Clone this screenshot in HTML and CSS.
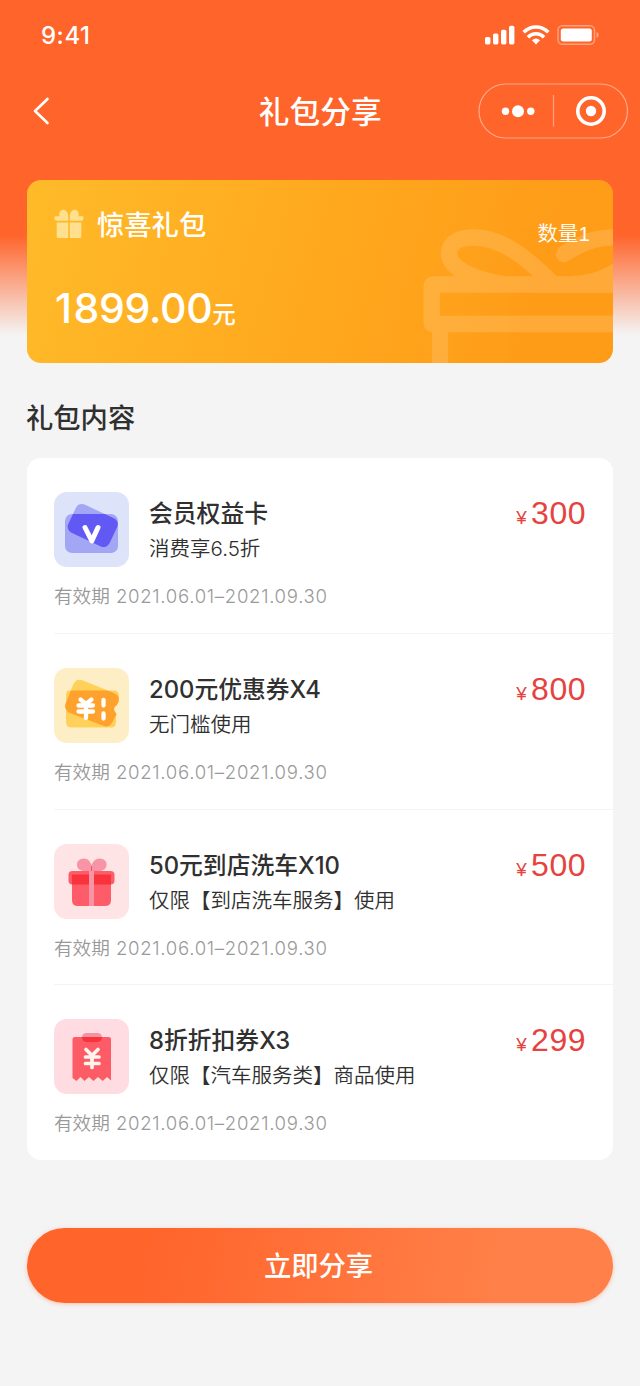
FILE: index.html
```html
<!DOCTYPE html>
<html lang="zh-CN">
<head>
<meta charset="utf-8">
<title>礼包分享</title>
<link rel="stylesheet" href="styles.css">
</head>
<body>
<div class="page">
  <header class="status">
    <span class="time">9:41</span>
    <svg class="signals" width="116" height="24" viewBox="0 0 116 24" fill="#fff">
      <rect x="1" y="13" width="5.400" height="7.400" rx="1.600"/>
      <rect x="9" y="9.500" width="5.400" height="10.900" rx="1.600"/>
      <rect x="17" y="5.800" width="5.400" height="14.600" rx="1.600"/>
      <rect x="25" y="1.800" width="5.400" height="18.600" rx="1.600"/>
      <g fill="none" stroke="#fff" stroke-width="3.500">
        <path d="M39.700 8.300C46.500 1.200 57.500 1.200 64.300 8.300"/>
        <path d="M43.900 13.200C48.500 8.500 55.500 8.500 60.100 13.200"/>
      </g>
      <path d="M47.900 16.300Q52 12.900 56.100 16.300L52 20.400Z"/>
      <rect x="74" y="1.800" width="36.500" height="18.400" rx="4.500" fill="none" stroke="#fff" stroke-opacity=".4" stroke-width="1.500"/>
      <rect x="76.800" y="4.600" width="31" height="12.800" rx="2.500"/>
      <path d="M112.600 7.800Q116.800 11 112.600 14.200Z" opacity=".45"/>
    </svg>
  </header>

  <nav class="nav">
    <svg class="back" width="20" height="30" viewBox="0 0 20 30" fill="none" stroke="#fff" stroke-width="2.600" stroke-linecap="round" stroke-linejoin="round"><path d="M15.500 3L3 15L15.500 27"/></svg>
    <h1 class="title">礼包分享</h1>
    <svg class="capsule" width="151" height="56" viewBox="0 0 151 56" fill="#fff">
      <rect x="1" y="1" width="148.500" height="54" rx="27" fill="none" stroke="#fff" stroke-opacity=".45" stroke-width="1.200"/>
      <path d="M75.500 12V43.500" stroke="#fff" stroke-opacity=".4" stroke-width="1.200"/>
      <circle cx="27.500" cy="28.300" r="3.700"/><circle cx="40" cy="28.300" r="6"/><circle cx="52.800" cy="28.300" r="3.700"/>
      <circle cx="113" cy="28" r="13.200" fill="none" stroke="#fff" stroke-width="3.600"/><circle cx="113" cy="28" r="5.200"/>
    </svg>
  </nav>

  <section class="bonus">
    <svg class="bonus-art" width="190" height="134" viewBox="423 229 190 134" fill="none" stroke="#fff" stroke-width="16.300">
      <g opacity=".14">
        <rect x="431.700" y="284.500" width="240" height="39.500" rx="1" stroke-linejoin="round"/>
        <path d="M440 332V370"/>
        <path d="M503 284C470 279 449 267 449 253C449 243 459 237.500 473 237.500C502 237.500 526 257 553 284"/>
        <path d="M564 254C581 243 596 236.500 620 237.500" stroke-linecap="round"/>
        <path d="M572 284C593 284 607 277 622 268"/>
      </g>
    </svg>
    <div class="bonus-head">
      <svg class="bonus-icon" width="30" height="30" viewBox="0 0 30 30" fill="#ffe08f">
        <path d="M2 7.200H5.700C4.200 3.300 7.200.2 10 .8C12.500 1.300 13.500 3.800 14.200 5.900V11.800H3Q.5 11.800.5 9.500V8.500Q.5 7.200 2 7.200Z"/>
        <path d="M28 7.200H24.300C25.800 3.300 22.800.2 20 .8C17.500 1.300 16.500 3.800 15.800 5.900V11.800H27Q29.500 11.800 29.500 9.500V8.500Q29.500 7.200 28 7.200Z"/>
        <path d="M2.700 13.400H14.200V29H4.200Q2.700 29 2.700 27.500ZM15.800 13.400H27.300V27.500Q27.300 29 25.800 29H15.800Z"/>
      </svg>
      <h2 class="bonus-name">惊喜礼包</h2>
      <span class="bonus-count">数量1</span>
    </div>
    <p class="bonus-sum"><span class="lead">1</span>899.00<small>元</small></p>
  </section>

  <h2 class="section-title">礼包内容</h2>

  <ul class="list">
    <li class="item">
      <div class="item-main">
        <svg class="icon" viewBox="0 0 75 75">
          <rect width="75" height="75" rx="13" fill="#dde4f9"/>
          <rect x="11" y="22" width="53" height="39" rx="7" fill="#a3a6f5"/>
          <rect x="16" y="18" width="45.500" height="31" rx="6.500" transform="rotate(25 38.750 33.500)" fill="#a3a6f5"/>
          <clipPath id="card"><rect x="11" y="22" width="53" height="39" rx="7"/></clipPath>
          <g clip-path="url(#card)"><rect x="16" y="18" width="45.500" height="31" rx="6.500" transform="rotate(25 38.750 33.500)" fill="#6259f5"/></g>
          <path d="M31 35.500L37.800 49L44 35.500" fill="none" stroke="#fff" stroke-width="5" stroke-linecap="round" stroke-linejoin="round"/>
        </svg>
        <div class="item-text"><h3>会员权益卡</h3><p>消费享6.5折</p></div>
        <div class="price"><i>¥</i>300</div>
      </div>
      <p class="valid">有效期 <span>2021.06.01–2021.09.30</span></p>
    </li>
    <li class="item">
      <div class="item-main">
        <svg class="icon" viewBox="0 0 75 75">
          <rect width="75" height="75" rx="13" fill="#feeec6"/>
          <path d="M15 22.500H60Q65 22.500 65 28V34Q57 40 62 46V54Q62 59.500 57 59.500H18Q12 59.500 12 54V28Q12 22.500 15 22.500Z" fill="#ffd05a"/>
          <path d="M29 12.500L60 25Q66 28 64.500 33L63 37Q57 40 62.500 46L59 53Q56 60 50 58L16 45Q10 42 11.500 36L19 17Q22 10 29 12.500Z" fill="#ffd05a"/>
          <clipPath id="coupon"><rect x="10" y="22.500" width="56" height="37" rx="6"/></clipPath>
          <path d="M29 12.500L60 25Q66 28 64.500 33L63 37Q57 40 62.500 46L59 53Q56 60 50 58L16 45Q10 42 11.500 36L19 17Q22 10 29 12.500Z" fill="#ffa12d" clip-path="url(#coupon)"/>
          <path d="M26.500 31.500L32 36L37.500 31.500M24.500 37.500H39M24.500 43.500H39M32 36V50M49.500 32V37.500M49.500 45.500V50.500" fill="none" stroke="#fff" stroke-width="4.300" stroke-linecap="round"/>
        </svg>
        <div class="item-text"><h3>200元优惠券X4</h3><p>无门槛使用</p></div>
        <div class="price"><i>¥</i>800</div>
      </div>
      <p class="valid">有效期 <span>2021.06.01–2021.09.30</span></p>
    </li>
    <li class="item">
      <div class="item-main">
        <svg class="icon" viewBox="0 0 75 75">
          <rect width="75" height="75" rx="13" fill="#fee4e4"/>
          <path d="M18 27H57V56Q57 62 51 62H24Q18 62 18 56Z" fill="#fe5c68"/>
          <rect x="14.500" y="27" width="46" height="13.500" rx="4" fill="#fe5c68"/>
          <path d="M18 30.500H57V40.500H18Z" fill="#f8333c"/>
          <path d="M35 27H30C22 27 21 18 26 15.500C32 12.500 37 17 37.500 22C38 17 44 12.500 49.500 15.500C55 18 53 27 46 27H40V62H35Z" fill="#f794a5"/>
          <path d="M37.500 22V27" stroke="#ee5269" stroke-width="1"/>
        </svg>
        <div class="item-text"><h3>50元到店洗车X10</h3><p>仅限【到店洗车服务】使用</p></div>
        <div class="price"><i>¥</i>500</div>
      </div>
      <p class="valid">有效期 <span>2021.06.01–2021.09.30</span></p>
    </li>
    <li class="item">
      <div class="item-main">
        <svg class="icon" viewBox="0 0 75 75">
          <rect width="75" height="75" rx="13" fill="#ffdbe2"/>
          <path d="M18.500 58H57V61.500H18.500Z" fill="#fce3d8"/>
          <path d="M18.500 20Q18.500 18 21 18H54.500Q57 18 57 20V61.500L53 58L48.800 62L44 58L39.500 62L35 58L30.500 62L26.500 58L22.500 62L18.500 59Z" fill="#fd5b66"/>
          <rect x="28" y="14" width="20" height="9" rx="4.500" fill="#f791a1"/>
          <path d="M28 18H48V19Q47.500 23 43.500 23H32.500Q28.500 23 28 19Z" fill="#f7343e"/>
          <path d="M32 30.500L38 36.500L44 30.500M31.500 38H45M31.500 44.500H45M38 37V48.500" fill="none" stroke="#fff5ed" stroke-width="3.700" stroke-linecap="round"/>
        </svg>
        <div class="item-text"><h3>8折折扣券X3</h3><p>仅限【汽车服务类】商品使用</p></div>
        <div class="price"><i>¥</i>299</div>
      </div>
      <p class="valid">有效期 <span>2021.06.01–2021.09.30</span></p>
    </li>
  </ul>

  <button class="share">立即分享</button>
</div>
</body>
</html>
```
FILE: styles.css
```css
* { box-sizing: border-box; margin: 0; padding: 0; }
body {
  font-family: Inter, "Noto Sans CJK SC", sans-serif;
  color: #303030;
  background: #f4f4f4;
}
.page {
  min-height: 1386px;
  padding: 0 27px;
  background: linear-gradient(180deg, #ff642b 0, #ff642b 235px, #f4f4f4 335px);
}
svg { display: block; flex: none; }
.status {
  display: flex;
  justify-content: space-between;
  height: 83px;
  padding: 24px 13.5px 0 14px;
}
.time { color: #fff; font-size: 24px; line-height: 24px; font-weight: 500; letter-spacing: 0.5px; }
.nav {
  display: grid;
  grid-template-columns: 151px 1fr 151px;
  align-items: center;
  height: 56px;
  margin: 0 -15.5px 0 -12px;
}
.back { margin-left: 17px; }
.title { color: #fff; font-size: 30.7px; line-height: 44px; font-weight: 500; text-align: center; padding: 2px 3px 0 0; }
.bonus {
  position: relative;
  height: 183px;
  margin-top: 41px;
  width: 586px;
  padding: 29px 23px 0 27px;
  border-radius: 14px;
  overflow: hidden;
  color: #fff;
  background: linear-gradient(105deg, #ffbb29 0%, #ffa81e 50%, #ff9d18 85%);
}
.bonus-art { position: absolute; right: 0; bottom: 0; }
.bonus-head { position: relative; display: flex; align-items: flex-start; height: 64px; }
.bonus-name { margin: -4px 0 0 13px; font-size: 27.3px; line-height: 42px; font-weight: 500; }
.bonus-count { margin: 10px 0 0 auto; font: 350 20.5px/30px "Liberation Sans", "Noto Sans CJK SC", sans-serif; }
.bonus-sum { position: relative; margin-top: 10px; padding-left: 1px; font-size: 41px; line-height: 50px; font-weight: 500; white-space: nowrap; letter-spacing: -0.3px; }
.bonus-sum .lead { letter-spacing: 1.5px; }
.bonus-sum small { font-size: 23.5px; }
.section-title { margin-top: 36px; font-size: 27.3px; line-height: 40px; font-weight: 500; margin-left: -1px; }
.list {
  width: 586px;
  height: 702px;
  margin-top: 19px;
  border-radius: 14px;
  background: #fff;
  list-style: none;
  overflow: hidden;
}
.item { height: 175.8px; padding: 34px 27px 0; position: relative; }
.item + .item::before { content: ""; position: absolute; left: 27px; right: 0; top: -1px; height: 1px; background: #f4f4f4; }
.item-main { display: flex; height: 75px; }
.icon { width: 75px; height: 75px; }
.item-text { margin: 3px 0 0 20px; flex: 1; white-space: nowrap; }
.item-text h3 { font-size: 23.8px; line-height: 37px; font-weight: 500; }
.item-text p { font-size: 20.5px; line-height: 34px; font-weight: 350; }
.price { color: #e64340; font-family: "Liberation Sans", sans-serif; font-size: 32px; line-height: 42px; letter-spacing: 0.5px; }
.price i { font-style: normal; font-size: 18.8px; margin-right: 4px; }
.valid { margin-top: 15px; font-size: 18.6px; line-height: 28px; font-weight: 350; color: #999; white-space: nowrap; }
.valid span { margin-left: 1px; letter-spacing: 0.68px; }
.share {
  display: block;
  width: 586px;
  height: 75px;
  margin-top: 68px;
  padding: 3px 3px 0 0;
  border: 0;
  border-radius: 38px;
  color: #fff;
  font: 500 27.3px/40px Inter, "Noto Sans CJK SC", sans-serif;
  background: linear-gradient(100deg, #ff642b 20%, #ff8048 80%);
  box-shadow: 0 1px 4px rgba(255, 100, 43, .35);
}
```
